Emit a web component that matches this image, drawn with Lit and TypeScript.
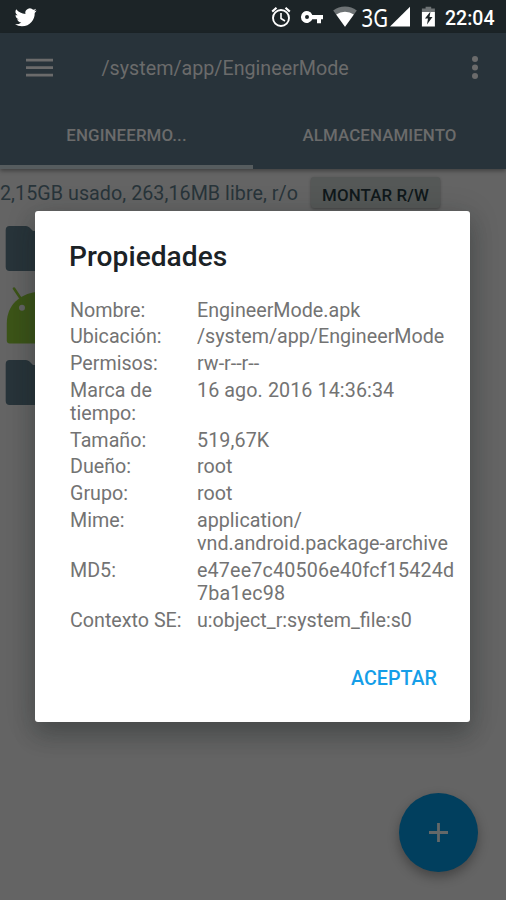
import { LitElement, html, css, svg } from "lit";
import { customElement } from "lit/decorators.js";

const rows: [string, string, string?][] = [
  ["Nombre:", "EngineerMode.apk"],
  ["Ubicación:", "/system/app/EngineerMode"],
  ["Permisos:", "rw-r--r--"],
  ["Marca de tiempo:", "16 ago. 2016 14:36:34", "dated"],
  ["Tamaño:", "519,67K", "dated"],
  ["Dueño:", "root"],
  ["Grupo:", "root"],
  ["Mime:", "application/\nvnd.android.package-archive"],
  ["MD5:", "e47ee7c40506e40fcf15424d\n7ba1ec98", "hash"],
  ["Contexto SE:", "u:object_r:system_file:s0"],
];

@customElement("status-bar")
class StatusBar extends LitElement {
  static styles = css`
    :host {
      display: flex;
      height: 33px;
      align-items: center;
      justify-content: space-between;
      background: #1c2427;
      color: #fff;
    }
    svg { display: block; overflow: visible; }
    .left { padding-left: 15px; }
    .right { display: flex; align-items: center; height: 33px; }
    .clock { width: 61px; font: 500 19.500px/33px Roboto, sans-serif; padding-top: 3px; }
  `;
  render() {
    return html`
      <div class="left">
        <svg width="22" height="22" viewBox="0 0 24 24" fill="#fff">
          <path d="M23.6 4.9a9.600 9.600 0 0 1-2.800.8 4.900 4.900 0 0 0 2.100-2.700c-.9.6-2 1-3.100 1.200a4.900 4.900 0 0 0-8.400 4.500A13.900 13.900 0 0 1 1.300 3.600a4.900 4.900 0 0 0 1.500 6.500 4.900 4.900 0 0 1-2.200-.6 4.900 4.900 0 0 0 3.900 4.900 4.900 4.900 0 0 1-2.200.1 4.900 4.900 0 0 0 4.600 3.400A9.900 9.900 0 0 1 0 19.900a13.900 13.900 0 0 0 7.500 2.200c9.100 0 14.300-7.700 14-14.600a10 10 0 0 0 2.100-2.600z"/>
        </svg>
      </div>
      <div class="right">
        <svg width="174" height="33" viewBox="271 0 174 33">
          <g fill="none" stroke="#fff" stroke-width="1.900">
            <circle cx="281" cy="18" r="8"/>
            <path d="M281 13v5.500l4 2.500" stroke-width="1.600"/>
            <path d="M272.200 11.600l4.300-3.800M289.800 11.600l-4.300-3.800" stroke-width="2.100"/>
          </g>
          <path fill="#fff" fill-rule="evenodd" d="M312.300 14.900H323v4.300h-2v4h-4v-4h-4.700a5.900 5.900 0 1 1 0-4.300zM307 15a2 2 0 1 0 0 4 2 2 0 0 0 0-4z"/>
          <path fill="#6e7375" d="M333.200 10.600a19 19 0 0 1 23.600 0L345 26.800z"/>
          <path fill="#fff" d="M336.200 14.600a15 15 0 0 1 17.600 0L345 26.800z"/>
          <text x="361.500" y="26.600" fill="#fff" font-family="Noto Sans, sans-serif" font-size="25.500" textLength="26.500" lengthAdjust="spacingAndGlyphs">3G</text>
          <path fill="#fff" d="M390 26.500h20V6.700z"/>
          <path fill="#6e7375" d="M425.600 6.700h5.600v1.800h3.700V12h-13V8.500h3.700z"/>
          <path fill="#fff" fill-rule="evenodd" d="M421.900 12h13v14.500h-13zM430.500 11.500l-5.600 7h3.100l-1 6 5.500-7.500h-3z"/>
        </svg>
        <div class="clock">22:04</div>
      </div>
    `;
  }
}

@customElement("properties-dialog")
class PropertiesDialog extends LitElement {
  static styles = css`
    :host {
      display: flex;
      flex-direction: column;
      box-sizing: border-box;
      background: #fff;
      border-radius: 3px;
      padding: 29px 15px 0 34px;
      box-shadow: 0 14px 22px rgba(20, 28, 28, 0.24), 0 4px 30px rgba(20, 28, 28, 0.2);
      font-family: Roboto, sans-serif;
    }
    h2 { margin: 0; font-size: 28.100px; line-height: 33px; font-weight: 500; color: #1b2226; letter-spacing: 0.050px; }
    .table {
      display: grid;
      grid-template-columns: 127px 1fr;
      row-gap: 3.500px;
      margin: 25.600px 0 0 1px;
      font-size: 19.700px;
      line-height: 23.200px;
      color: #737373;
    }
    .key { padding-right: 14px; }
    .value { white-space: pre; }
    .dated { letter-spacing: 0.100px; }
    .hash { letter-spacing: 0.180px; }
    .actions { display: flex; justify-content: flex-end; margin-top: 35px; padding-right: 18px; }
    .ok { color: #159ee8; font-size: 19.700px; line-height: 23px; font-weight: 500; }
  `;
  render() {
    return html`
      <h2>Propiedades</h2>
      <div class="table">
        ${rows.map(([k, v, kind]) => html`<div class="key">${k}</div><div class="value ${kind ?? ""}">${v}</div>`)}
      </div>
      <div class="actions"><div class="ok">ACEPTAR</div></div>
    `;
  }
}

const folder = svg`<path fill="#28343a" d="M5.700 4q0-4 4-4h16.300q2 0 3.500 1.500L33 5h12v40H9.700q-4 0-4-4z"/>`;

@customElement("app-root")
class AppRoot extends LitElement {
  static styles = css`
    :host {
      display: flex;
      flex-direction: column;
      position: relative;
      width: 506px;
      height: 900px;
      overflow: hidden;
      background: #646464;
      font-family: Roboto, sans-serif;
    }
    svg { display: block; }
    .header {
      background: #28333a;
      box-shadow: 0 2px 4px rgba(0, 0, 0, 0.35);
      height: 136px;
      display: flex;
      flex-direction: column;
      color: #6b6b6b;
    }
    .bar { display: flex; align-items: center; height: 70px; padding: 0 26px; }
    .menu { margin-top: -1px; }
    .path { flex: 1; font-size: 19.700px; padding-left: 48.500px; line-height: 24px; padding-top: 2px; }
    .tabs { display: flex; flex: 1; }
    .tab {
      flex: 1;
      display: flex;
      align-items: center;
      justify-content: center;
      box-sizing: border-box;
      border-bottom: 4px solid transparent;
      font-size: 16.900px;
      font-weight: 500;
      letter-spacing: 0.100px;
      padding-top: 1px;
    }
    .active { border-color: #565c5e; }
    .info { display: flex; height: 50px; align-items: center; color: #28343a; font-size: 19.700px; white-space: pre; }
    .usage { letter-spacing: 0.050px; padding-bottom: 2px; }
    .mount {
      margin: -3px 0 0 13px;
      width: 129px;
      height: 31px;
      border-radius: 3px;
      background: #555857;
      box-shadow: 0 1px 3px rgba(0, 0, 0, 0.35);
      color: #10181b;
      font-size: 16.900px;
      font-weight: 500;
      letter-spacing: 0.100px;
      line-height: 36px;
      text-align: center;
    }
    .list { display: flex; flex-direction: column; padding-top: 7px; }
    .dialog { position: absolute; left: 35px; top: 211px; width: 435px; height: 511px; }
    .fab {
      position: absolute;
      left: 399px;
      top: 793px;
      width: 79px;
      height: 79px;
      border-radius: 50%;
      background: #013f5e;
      box-shadow: 0 5px 12px rgba(0, 0, 0, 0.32);
    }
  `;
  render() {
    return html`
      <status-bar></status-bar>
      <div class="header">
        <div class="bar">
          <svg class="menu" width="27" height="20" viewBox="0 0 27 20" fill="#6b6b6b"><path d="M0 .7h27v2.700H0zM0 8.200h27v2.700H0zM0 15.700h27v2.700H0z"/></svg>
          <div class="path">/system/app/EngineerMode</div>
          <svg width="10" height="26" viewBox="0 0 10 26" fill="#6b6b6b"><circle cx="5" cy="4" r="3"/><circle cx="5" cy="12.500" r="3"/><circle cx="5" cy="21" r="3"/></svg>
        </div>
        <div class="tabs">
          <div class="tab active">ENGINEERMO...</div>
          <div class="tab">ALMACENAMIENTO</div>
        </div>
      </div>
      <div class="info"><span class="usage">2,15GB usado, 263,16MB libre, r/o</span><div class="mount">MONTAR R/W</div></div>
      <div class="list">
        <svg width="45" height="61" viewBox="0 0 45 61">${folder}</svg>
        <svg width="45" height="73" viewBox="0 0 45 73">
          <path d="M14 1.500l6 9" stroke="#3c5418" stroke-width="2.500" stroke-linecap="round"/>
          <path fill="#3c5418" d="M6.800 36C7 18 20 7 36 5h9v51.500H9.800q-3 0-3-3z"/>
          <circle cx="22" cy="20.800" r="3" fill="#646464"/>
        </svg>
        <svg width="45" height="61" viewBox="0 0 45 61">${folder}</svg>
      </div>
      <properties-dialog class="dialog"></properties-dialog>
      <div class="fab"><svg width="79" height="79" viewBox="0 0 79 79"><path d="M30 39.500h19M39.500 30v19" stroke="#646868" stroke-width="2.800"/></svg></div>
    `;
  }
}
